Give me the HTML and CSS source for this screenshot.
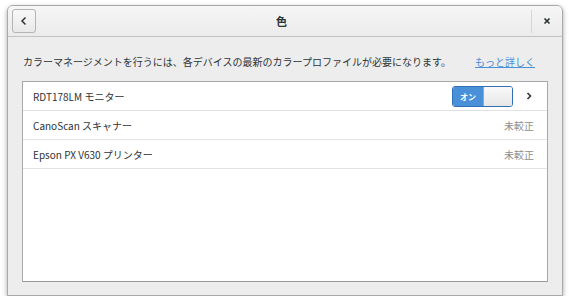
FILE: index.html
```html
<!DOCTYPE html>
<html lang="ja">

<head>
  <meta charset="utf-8">
  <title>色</title>
  <link rel="stylesheet" href="styles.css">
</head>

<body>
  <div class="window">
    <header class="titlebar">
      <button class="back" aria-label="戻る">
        <svg width="10" height="10" viewBox="0 0 10 10">
          <path d="M6.5 1.5 L3 5 L6.5 8.5" fill="none" stroke="#2e3436" stroke-width="1.5"/>
        </svg>
      </button>
      <h1>色</h1>
      <div class="close-wrap">
        <button class="close" aria-label="閉じる">
          <svg width="8" height="8" viewBox="0 0 8 8">
            <path d="M1.5 1.5 L6.5 6.5 M6.5 1.5 L1.5 6.5" stroke="#2e3436" stroke-width="1.7"/>
          </svg>
        </button>
      </div>
    </header>

    <main class="content">
      <div class="intro">
        <p>カラーマネージメントを行うには、各デバイスの最新のカラープロファイルが必要になります。</p>
        <a href="#">もっと詳しく</a>
      </div>

      <ul class="devices">
        <li class="device">
          <span class="name">RDT178LM モニター</span>
          <span class="switch"><span class="on">オン</span><span class="knob"></span></span>
          <svg class="chevron" width="6" height="8" viewBox="0 0 6 8">
            <path d="M1.5 1 L4.5 4 L1.5 7" fill="none" stroke="#2e3436" stroke-width="1.6"/>
          </svg>
        </li>
        <li class="device">
          <span class="name">CanoScan スキャナー</span>
          <span class="status">未較正</span>
        </li>
        <li class="device">
          <span class="name">Epson PX V630 プリンター</span>
          <span class="status">未較正</span>
        </li>
      </ul>
    </main>
  </div>
</body>

</html>
```

FILE: styles.css
```css
* {
  margin: 0;
  padding: 0;
  box-sizing: border-box;
  font-family: 'Noto Sans CJK JP', 'DejaVu Sans', sans-serif;
}

body {
  background: #fff;
  padding: 5px 0 0 7px;
}

.window {
  width: 556px;
  height: 291px;
  display: flex;
  flex-direction: column;
  background: #ededed;
  border: 1px solid #a9a9a9;
  border-radius: 6px 6px 0 0;
  box-shadow: 0 2px 5px rgba(0, 0, 0, 0.35);
  overflow: hidden;
}

.titlebar {
  height: 31px;
  display: flex;
  align-items: center;
  padding: 0 4px;
  background: linear-gradient(#f6f6f6, #ebebeb);
  border-bottom: 1px solid #c2c2c2;
}

.back {
  width: 24px;
  height: 24px;
  display: flex;
  align-items: center;
  justify-content: center;
  border: 1px solid #b4b4b4;
  border-radius: 3px;
  background: linear-gradient(#f8f8f8, #e9e9e9);
}

.titlebar h1 {
  flex: 1;
  text-align: center;
  font-size: 11px;
  font-weight: bold;
  color: #2e3436;
  padding-right: 4px;
}

.close-wrap {
  height: 23px;
  display: flex;
  align-items: center;
  border-left: 1px solid #d6d6d6;
  padding: 0 7px 0 10px;
}

.close {
  width: 9px;
  height: 9px;
  display: flex;
  align-items: center;
  justify-content: center;
  border: none;
  background: none;
}

.content {
  flex: 1;
  display: flex;
  flex-direction: column;
  padding: 0 14px 13px 14px;
}

.intro {
  height: 44px;
  display: flex;
  align-items: center;
  justify-content: space-between;
  padding: 4px 13px 0 1px;
  font-size: 10px;
  color: #2e3436;
}

.intro a {
  color: #4a90d9;
  text-decoration: underline;
}

.devices {
  flex: 1;
  list-style: none;
  background: #fff;
  border: 1px solid #a8a8a8;
  border-bottom-color: #9a9a9a;
}

.device {
  height: 29px;
  display: flex;
  align-items: center;
  padding: 0 13px 0 10px;
  border-bottom: 1px solid #e2e2e2;
  font-size: 10px;
  color: #2e3436;
}

.device .name {
  flex: 1;
}

.status {
  color: #8b8e8f;
}

.switch {
  width: 61px;
  height: 21px;
  display: flex;
  border: 1px solid #2f6fb6;
  border-radius: 3px;
  overflow: hidden;
  margin-right: 13px;
}

.switch .on {
  width: 30px;
  display: flex;
  align-items: center;
  justify-content: center;
  background: #4a90d9;
  color: #fff;
  font-size: 8px;
  font-weight: bold;
}

.switch .knob {
  flex: 1;
  background: linear-gradient(#fafafa, #e6e6e6);
  border-left: 1px solid #9aa7b5;
}

.chevron {
  display: block;
  margin-right: 2px;
}
```
